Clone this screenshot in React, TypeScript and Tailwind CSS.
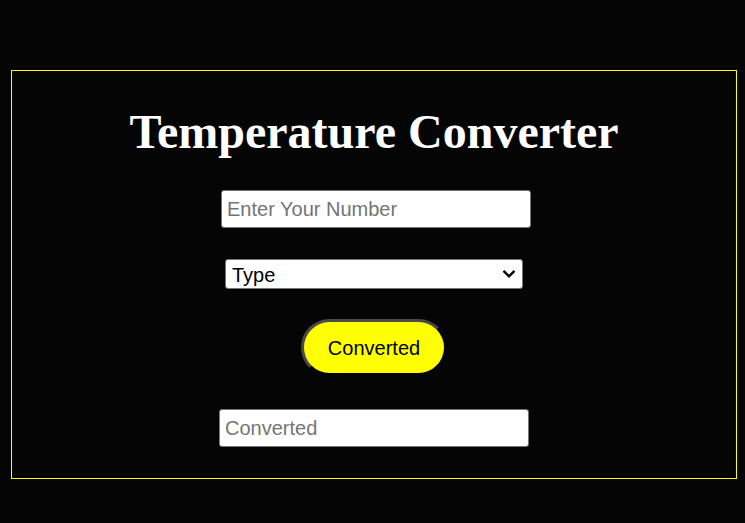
export default function App() {
  return (
    <div className="min-h-screen bg-[#050505] pt-[70px] pl-[11px] pr-[8px] pb-[44px] font-['Liberation_Sans',Arial,sans-serif]">
      <div className="h-[409px] border border-[#ffff00] flex flex-col items-center">
        <h1 className="mt-[32px] text-[48px] leading-[58px] font-bold text-white font-['Liberation_Serif','Times_New_Roman',serif]">
          Temperature Converter
        </h1>

        <input
          type="text"
          placeholder="Enter Your Number"
          className="mt-[29px] ml-[4px] w-[310px] h-[38px] bg-white border border-[#767676] rounded-[3px] px-[5px] text-[20px] text-black placeholder:text-[#757575] outline-none"
        />

        <div className="relative mt-[31px] w-[298px] h-[30px]">
          <select className="w-full h-full appearance-none bg-white border border-[#767676] rounded-[3px] pl-[6px] text-[20px] text-black outline-none">
            <option>Type</option>
            <option>Celsius</option>
            <option>Fahrenheit</option>
          </select>
          <svg
            className="absolute right-[7px] top-[10px] pointer-events-none"
            width="14"
            height="10"
            viewBox="0 0 14 10"
          >
            <path d="M1.5 1.8 L7 7.3 L12.5 1.8" fill="none" stroke="black" strokeWidth="2.4" />
          </svg>
        </div>

        <button className="mt-[30px] w-[146px] h-[57px] rounded-full bg-[#ffff00] border-[3px] border-t-[#4a4a4a] border-l-[#4a4a4a] border-r-[#050505] border-b-[#050505] text-[20px] text-black">
          Converted
        </button>

        <input
          type="text"
          placeholder="Converted"
          className="mt-[33px] w-[310px] h-[38px] bg-white border border-[#767676] rounded-[3px] px-[5px] text-[20px] text-black placeholder:text-[#757575] outline-none"
        />
      </div>
    </div>
  );
}
